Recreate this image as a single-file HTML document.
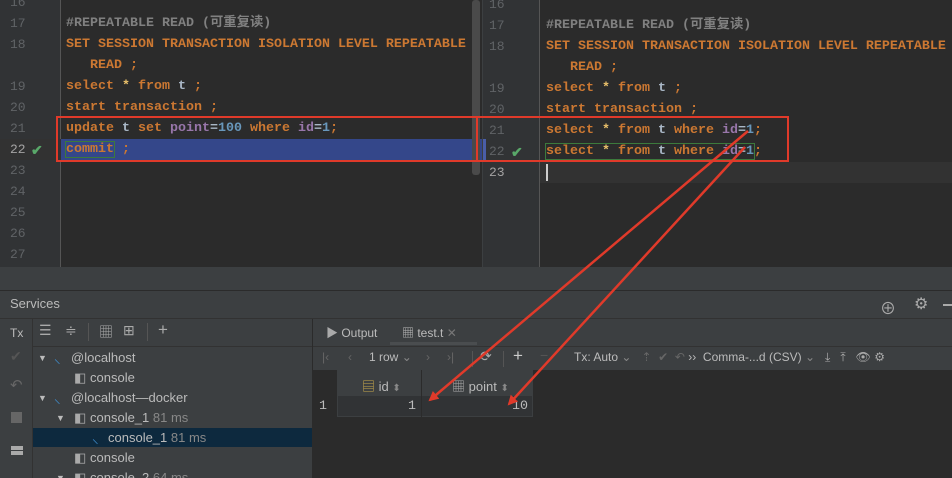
<!DOCTYPE html>
<html><head><meta charset="utf-8"><style>
*{margin:0;padding:0;box-sizing:border-box}
html,body{width:952px;height:478px;overflow:hidden}
body{background:#3c3f41;position:relative;font-family:"Liberation Sans","Noto Sans CJK SC",sans-serif}
.ab{position:absolute}
.code{font-family:"Liberation Mono","Noto Sans CJK SC",monospace;font-size:13.33px;font-weight:bold;white-space:pre;line-height:21px}
.ln{font-family:"Liberation Mono",monospace;font-size:13px;color:#606366;line-height:21px}
.k{color:#cc7832}.c{color:#808080}.p{color:#9876aa}.n{color:#6897bb}.w{color:#a9b7c6}
.t{color:#bbbbbb;font-size:13px;white-space:nowrap}
.ic{color:#aaa;font-size:14px}
.tri{font-size:9px;color:#bbb;white-space:nowrap}
</style></head><body>
<!-- left editor -->
<div class="ab" style="left:0;top:0;width:482px;height:267px;background:#2b2b2b"></div>
<div class="ab" style="left:0;top:0;width:61px;height:267px;background:#313335;border-right:1px solid #555"></div>
<div class="ab" style="left:0;top:139px;width:482px;height:21px;background:#323232"></div>
<div class="ab" style="left:61px;top:139px;width:421px;height:21px;background:#34478a"></div>
<div class="ab" style="left:472px;top:0;width:8px;height:175px;background:#4a4a4a;border-radius:3px"></div>
<div class="ab ln" style="left:10px;top:-8px">16<br>17<br>18<br><br>19<br>20<br>21<br><span style="color:#a4a3a3">22</span><br>23<br>24<br>25<br>26<br>27</div>
<div class="ab" style="left:31px;top:142px;color:#59a869;font-size:14px;font-weight:bold">✔</div>
<div class="ab code" style="left:66px;top:13px"><span class="c">#REPEATABLE READ (可重复读)</span>
<span class="k">SET SESSION TRANSACTION ISOLATION LEVEL REPEATABLE</span>
<span class="k">   READ ;</span>
<span class="k">select </span><span style="color:#e8bf6a">*</span><span class="k"> from </span><span class="w">t</span><span class="k"> ;</span>
<span class="k">start transaction ;</span>
<span class="k">update </span><span class="w">t</span><span class="k"> set </span><span class="p">point</span><span class="w">=</span><span class="n">100</span><span class="k"> where </span><span class="p">id</span><span class="w">=</span><span class="n">1</span><span class="k">;</span>
<span class="k" style="outline:1px solid #3c7a3c">commit</span><span class="k"> ;</span></div>
<div class="ab" style="left:56px;top:116px;width:426px;height:46px;border:2px solid #e03a2a;border-right:none"></div>
<!-- right editor -->
<div class="ab" style="left:483px;top:0;width:469px;height:267px;background:#2b2b2b"></div>
<div class="ab" style="left:483px;top:0;width:57px;height:267px;background:#313335;border-right:1px solid #555"></div>
<div class="ab" style="left:483px;top:139px;width:3px;height:21px;background:#4a5ea8"></div>
<div class="ab" style="left:540px;top:162px;width:412px;height:21px;background:#323232"></div>
<div class="ab ln" style="left:489px;top:-6px">16<br>17<br>18<br><br>19<br>20<br>21<br>22<br><span style="color:#a4a3a3">23</span></div>
<div class="ab" style="left:511px;top:144px;color:#59a869;font-size:14px;font-weight:bold">✔</div>
<div class="ab code" style="left:546px;top:15px"><span class="c">#REPEATABLE READ (可重复读)</span>
<span class="k">SET SESSION TRANSACTION ISOLATION LEVEL REPEATABLE</span>
<span class="k">   READ ;</span>
<span class="k">select </span><span style="color:#e8bf6a">*</span><span class="k"> from </span><span class="w">t</span><span class="k"> ;</span>
<span class="k">start transaction ;</span>
<span class="k">select </span><span style="color:#e8bf6a">*</span><span class="k"> from </span><span class="w">t</span><span class="k"> where </span><span class="p">id</span><span class="w">=</span><span class="n">1</span><span class="k">;</span>
<span style="outline:1px solid #3c7a3c"><span class="k">select </span><span style="color:#e8bf6a">*</span><span class="k"> from </span><span class="w">t</span><span class="k"> where </span><span class="p">id</span><span class="w">=</span><span class="n">1</span></span><span class="k">;</span></div>
<div class="ab" style="left:546px;top:164px;width:2px;height:17px;background:#ccc"></div>
<div class="ab" style="left:476px;top:116px;width:313px;height:46px;border:2px solid #e03a2a"></div>
<!-- services header -->
<div class="ab" style="left:0;top:290px;width:952px;height:1px;background:#2b2b2b"></div>
<div class="ab t" style="left:10px;top:296px;font-size:13px">Services</div>
<div class="ab t" style="left:880px;top:295px;font-size:16px;color:#aaa">⊕</div>
<div class="ab t" style="left:914px;top:294px;font-size:16px;color:#aaa">⚙</div>
<div class="ab" style="left:943px;top:304px;width:9px;height:2px;background:#aaa"></div>
<div class="ab" style="left:0;top:318px;width:952px;height:1px;background:#323232"></div>
<!-- left col -->
<div class="ab" style="left:32px;top:319px;width:1px;height:159px;background:#323232"></div>
<div class="ab t" style="left:10px;top:326px;font-size:12px">Tx</div>
<div class="ab t" style="left:10px;top:348px;color:#555;font-size:14px">✔</div>
<div class="ab t" style="left:10px;top:376px;color:#666;font-size:15px">↶</div>
<div class="ab" style="left:11px;top:412px;width:11px;height:11px;background:#666"></div>
<div class="ab" style="left:11px;top:446px;width:12px;height:9px;border-top:4px solid #aaa;border-bottom:4px solid #aaa"></div>
<!-- tree toolbar -->
<div class="ab ic" style="left:39px;top:322px">☰</div>
<div class="ab ic" style="left:65px;top:322px">≑</div>
<div class="ab" style="left:88px;top:323px;width:1px;height:18px;background:#555"></div>
<div class="ab ic" style="left:99px;top:322px">▦</div>
<div class="ab ic" style="left:123px;top:322px">⊞</div>
<div class="ab" style="left:147px;top:323px;width:1px;height:18px;background:#555"></div>
<div class="ab ic" style="left:158px;top:320px;font-size:17px">+</div>
<div class="ab" style="left:33px;top:346px;width:279px;height:1px;background:#323232"></div>
<div class="ab" style="left:33px;top:428px;width:279px;height:19px;background:#0d293e"></div>
<div class="ab tri" style="left:38px;top:353px">▼</div>
<div class="ab t" style="left:54px;top:349px;color:#3f8fd0">⸜</div>
<div class="ab t" style="left:71px;top:350px">@localhost</div>
<div class="ab t" style="left:74px;top:370px;color:#aaa">◧</div>
<div class="ab t" style="left:90px;top:370px">console</div>
<div class="ab tri" style="left:38px;top:393px">▼</div>
<div class="ab t" style="left:54px;top:389px;color:#3f8fd0">⸜</div>
<div class="ab t" style="left:71px;top:390px">@localhost—docker</div>
<div class="ab tri" style="left:56px;top:413px">▼</div>
<div class="ab t" style="left:74px;top:410px;color:#aaa">◧</div>
<div class="ab t" style="left:90px;top:410px">console_1 <span style="color:#888">81 ms</span></div>
<div class="ab t" style="left:92px;top:429px;color:#3f8fd0">⸜</div>
<div class="ab t" style="left:108px;top:430px">console_1 <span style="color:#888">81 ms</span></div>
<div class="ab t" style="left:74px;top:450px;color:#aaa">◧</div>
<div class="ab t" style="left:90px;top:450px">console</div>
<div class="ab tri" style="left:56px;top:473px">▼</div>
<div class="ab t" style="left:74px;top:470px;color:#aaa">◧</div>
<div class="ab t" style="left:90px;top:470px">console_2 <span style="color:#888">64 ms</span></div>
<div class="ab" style="left:312px;top:319px;width:1px;height:159px;background:#2b2b2b"></div>
<!-- right panel -->
<div class="ab t" style="left:326px;top:324px;font-size:12px"><span style="color:#aaa">▶</span> Output</div>
<div class="ab t" style="left:402px;top:324px;font-size:12px">▦ test.t <span style="color:#777">✕</span></div>
<div class="ab" style="left:390px;top:342px;width:87px;height:3px;background:#4a4d4f"></div>
<div class="ab" style="left:313px;top:346px;width:639px;height:24px;background:#3c3f41;border-top:1px solid #323232"></div>
<div class="ab t" style="left:322px;top:350px;font-size:12px;color:#666">|‹</div>
<div class="ab t" style="left:348px;top:350px;font-size:12px;color:#666">‹</div>
<div class="ab t" style="left:369px;top:350px;font-size:12px">1 row <span style="color:#888">⌄</span></div>
<div class="ab t" style="left:426px;top:350px;font-size:12px;color:#666">›</div>
<div class="ab t" style="left:447px;top:350px;font-size:12px;color:#666">›|</div>
<div class="ab" style="left:472px;top:351px;width:1px;height:16px;background:#555"></div>
<div class="ab t" style="left:480px;top:348px;font-size:14px;color:#aaa">⟳</div>
<div class="ab" style="left:503px;top:351px;width:1px;height:16px;background:#555"></div>
<div class="ab t" style="left:513px;top:346px;font-size:17px;color:#ccc">+</div>
<div class="ab t" style="left:540px;top:347px;font-size:14px;color:#555">−</div>
<div class="ab t" style="left:574px;top:350px;font-size:12px">Tx: Auto <span style="color:#888">⌄</span> &nbsp;&nbsp;<span style="color:#666">⇡ &nbsp;✔ &nbsp;↶</span> ›› &nbsp;Comma-...d (CSV) <span style="color:#888">⌄</span> &nbsp;&nbsp;<span style="color:#aaa">⤓ &nbsp;&nbsp;⤒ &nbsp;&nbsp;👁 ⚙</span></div>
<div class="ab" style="left:313px;top:370px;width:639px;height:108px;background:#2b2b2b"></div>
<div class="ab" style="left:337px;top:370px;width:196px;height:25px;background:#3c3f41"></div>
<div class="ab" style="left:337px;top:395px;width:196px;height:22px;background:#313335;border:1px solid #3c3f41"></div>
<div class="ab" style="left:421px;top:370px;width:1px;height:47px;background:#2b2b2b"></div>
<div class="ab t" style="left:362px;top:376px;font-size:13px"><span style="color:#c8a94b">▤</span> id <span style="color:#888;font-size:10px">⬍</span></div>
<div class="ab t" style="left:452px;top:376px;font-size:13px"><span style="color:#aaa">▦</span> point <span style="color:#888;font-size:10px">⬍</span></div>
<div class="ab code" style="left:319px;top:396px;color:#bbb;font-weight:normal">1</div>
<div class="ab code" style="left:408px;top:396px;color:#bbb;font-weight:normal">1</div>
<div class="ab code" style="left:512px;top:396px;color:#bbb;font-weight:normal">10</div>
<!-- arrows -->
<svg class="ab" style="left:0;top:0" width="952" height="478">
<defs><marker id="m" markerWidth="10" markerHeight="10" refX="8" refY="5" orient="auto" markerUnits="userSpaceOnUse"><path d="M0,0 L10,5 L0,10 z" fill="#e03a2a"/></marker></defs>
<line x1="748" y1="131" x2="430" y2="400" stroke="#e03a2a" stroke-width="2.5" marker-end="url(#m)"/>
<line x1="745" y1="147" x2="509" y2="404" stroke="#e03a2a" stroke-width="2.5" marker-end="url(#m)"/>
</svg>
</body></html>
